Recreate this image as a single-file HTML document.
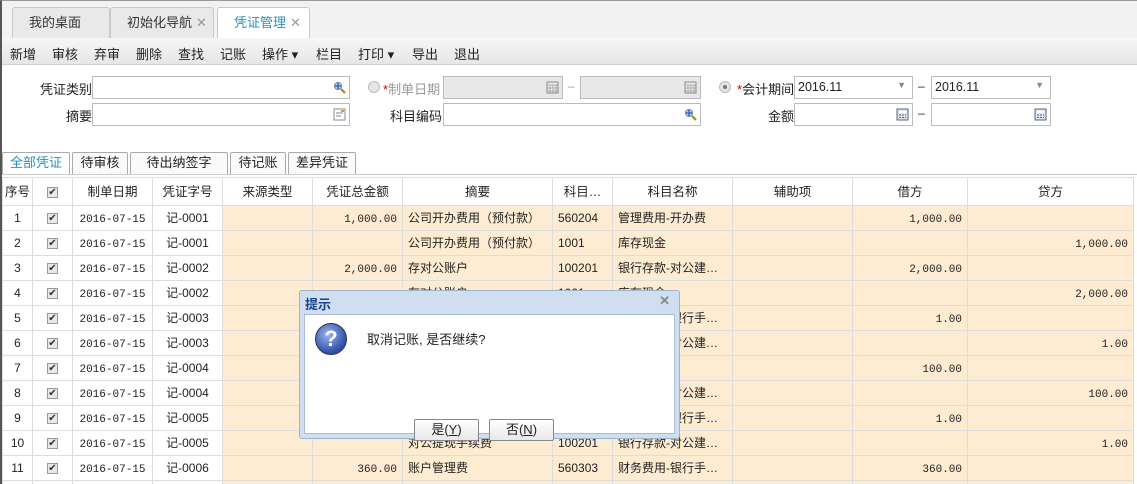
<!DOCTYPE html>
<html><head><meta charset="utf-8"><style>
*{box-sizing:border-box;margin:0;padding:0}
html,body{width:1137px;height:484px;overflow:hidden}
body{background:#fff;font-family:"Liberation Sans","Noto Sans CJK SC",sans-serif;font-size:12px;color:#222;position:relative}
.a{position:absolute}
.tabbar{left:0;top:0;width:1137px;height:38px;background:#f2f2f2;border-left:2px solid #555;border-top:1px solid #999}
.tab{position:absolute;top:6px;height:32px;border:1px solid #c8c8c8;border-bottom:none;background:#e9e9e9;border-radius:3px 3px 0 0;line-height:30px;font-size:13px;color:#333;padding-left:16px}
.tab .x{color:#999;font-size:13px;margin-left:4px}
.tab.on{background:#fff;color:#2a8fbd}
.tool{left:0;top:38px;width:1137px;height:27px;background:linear-gradient(#f6f6f6,#e6e6e6);border-left:2px solid #555;border-bottom:1px solid #d0d0d0}
.tool span{position:absolute;top:6px;font-size:13px;color:#222}
.lbl{position:absolute;font-size:13px;text-align:right;color:#222}
.inp{position:absolute;height:23px;border:1px solid #bbb;background:#fff}
.inp.g{background:#e8e8e8}
.ic{position:absolute;right:3px;top:4px;width:13px;height:13px}
.st{position:absolute;top:152px;height:22px;border:1px solid #aaa;border-bottom:none;border-radius:2px 2px 0 0;background:#fafafa;text-align:center;line-height:20px;font-size:13px}
table{position:absolute;left:2px;top:177px;border-collapse:collapse;table-layout:fixed}
td,th{border:1px solid #ddd;height:25px;line-height:23px;vertical-align:middle;font-weight:normal;font-size:12px;white-space:nowrap;overflow:hidden;padding:0 5px}
th{height:28px;line-height:26px;text-align:center;background:#fff;font-size:12.5px}
td.p{background:#fdebd2}
.n{font-family:"Liberation Mono",monospace;font-size:11px;text-align:right}
.n span{display:inline-block;line-height:11px;vertical-align:middle;position:relative;top:4px}
.c{text-align:center}
.cb{display:inline-block;vertical-align:middle;width:11px;height:11px;border:1px solid #999;background:#e8e8e8;font-size:10px;line-height:9px;text-align:center;color:#333}
.dlg{left:299px;top:290px;width:381px;height:149px;background:#cfdff0;border:1px solid #9db3cc;border-radius:3px}
.dlg .b{position:absolute;left:4px;top:23px;width:371px;height:120px;background:#fff;border:1px solid #a8bcd4}
.btn{position:absolute;top:104px;width:65px;height:22px;border:1px solid #888;border-radius:2px;background:linear-gradient(#fff,#e8e8e8);text-align:center;line-height:20px;font-size:13px}
</style></head><body>
<div class="a tabbar">
<div class="tab" style="left:10px;width:98px">我的桌面</div>
<div class="tab" style="left:108px;width:104px">初始化导航<span class="x">✕</span></div>
<div class="tab on" style="left:215px;width:93px;padding-left:16px">凭证管理<span class="x">✕</span></div>
</div>
<div class="a tool">
<span style="left:8px">新增</span><span style="left:50px">审核</span><span style="left:92px">弃审</span><span style="left:134px">删除</span><span style="left:176px">查找</span><span style="left:218px">记账</span><span style="left:260px">操作 ▾</span><span style="left:314px">栏目</span><span style="left:356px">打印 ▾</span><span style="left:410px">导出</span><span style="left:452px">退出</span>
</div>
<div class="lbl" style="left:20px;top:79px;width:72px">凭证类别</div>
<div class="inp" style="left:92px;top:76px;width:258px"><svg class="ic" viewBox="0 0 13 13"><circle cx="5" cy="5" r="3.5" fill="#cde" stroke="#68a"/><path d="M8 8l4 4" stroke="#a80" stroke-width="2"/><path d="M2 5h6M5 2v6" stroke="#36b" stroke-width="1.5"/></svg></div>
<div class="lbl" style="left:20px;top:106px;width:72px">摘要</div>
<div class="inp" style="left:92px;top:103px;width:258px"><svg class="ic" viewBox="0 0 13 13"><rect x="1" y="1" width="11" height="11" fill="#fff" stroke="#889"/><path d="M3 5h7M3 8h5" stroke="#789"/><rect x="8" y="2" width="3" height="2" fill="#e90"/></svg></div>
<div class="a" style="left:368px;top:81px;width:12px;height:12px;border-radius:50%;border:1px solid #bbb;background:#e4e4e4"></div>
<div class="lbl" style="left:383px;top:79px;color:#999"><span style="color:#c00">*</span>制单日期</div>
<div class="inp g" style="left:443px;top:76px;width:120px"><svg class="ic" viewBox="0 0 13 13"><rect x="1" y="1" width="11" height="11" fill="#eee" stroke="#888"/><path d="M1 4h11M4 4v8M7 4v8M10 4v8M1 7h11M1 10h11" stroke="#999" stroke-width=".7"/></svg></div>
<div class="a" style="left:568px;top:79px;color:#999">–</div>
<div class="inp g" style="left:580px;top:76px;width:121px"><svg class="ic" viewBox="0 0 13 13"><rect x="1" y="1" width="11" height="11" fill="#eee" stroke="#888"/><path d="M1 4h11M4 4v8M7 4v8M10 4v8M1 7h11M1 10h11" stroke="#999" stroke-width=".7"/></svg></div>
<div class="lbl" style="left:370px;top:106px;width:72px">科目编码</div>
<div class="inp" style="left:443px;top:103px;width:258px"><svg class="ic" viewBox="0 0 13 13"><circle cx="5" cy="5" r="3.5" fill="#cde" stroke="#68a"/><path d="M8 8l4 4" stroke="#a80" stroke-width="2"/><path d="M2 5h6M5 2v6" stroke="#36b" stroke-width="1.5"/></svg></div>
<div class="a" style="left:719px;top:81px;width:12px;height:12px;border-radius:50%;border:1px solid #bbb;background:#e4e4e4"><div style="margin:3px;width:4px;height:4px;border-radius:50%;background:#777"></div></div>
<div class="lbl" style="left:737px;top:79px"><span style="color:#c00">*</span>会计期间</div>
<div class="inp" style="left:794px;top:76px;width:119px;padding:3px 3px;font-size:12.5px">2016.11<span style="position:absolute;right:6px;top:3px;color:#888;font-size:9px">▼</span></div>
<div class="a" style="left:918px;top:79px">–</div>
<div class="inp" style="left:931px;top:76px;width:120px;padding:3px 3px;font-size:12.5px">2016.11<span style="position:absolute;right:6px;top:3px;color:#888;font-size:9px">▼</span></div>
<div class="lbl" style="left:740px;top:106px;width:54px">金额</div>
<div class="inp" style="left:794px;top:103px;width:119px"><svg class="ic" viewBox="0 0 13 13"><rect x="1" y="1" width="11" height="11" fill="#dde6f2" stroke="#567"/><rect x="3" y="3" width="7" height="2" fill="#fff"/><path d="M3 7h2M6 7h2M9 7h1M3 9.5h2M6 9.5h2M9 9.5h1" stroke="#567"/></svg></div>
<div class="a" style="left:918px;top:106px">–</div>
<div class="inp" style="left:931px;top:103px;width:120px"><svg class="ic" viewBox="0 0 13 13"><rect x="1" y="1" width="11" height="11" fill="#dde6f2" stroke="#567"/><rect x="3" y="3" width="7" height="2" fill="#fff"/><path d="M3 7h2M6 7h2M9 7h1M3 9.5h2M6 9.5h2M9 9.5h1" stroke="#567"/></svg></div>
<div class="a" style="left:0;top:38px;width:2px;height:446px;background:#555;z-index:2"></div>
<div class="st" style="left:2px;width:68px;color:#2a8fbd;background:#fff">全部凭证</div>
<div class="st" style="left:72px;width:56px">待审核</div>
<div class="st" style="left:130px;width:98px">待出纳签字</div>
<div class="st" style="left:230px;width:56px">待记账</div>
<div class="st" style="left:288px;width:68px">差异凭证</div>
<div class="a" style="left:2px;top:174px;width:1135px;height:1px;background:#ccc"></div>
<table>
<colgroup><col style="width:30px"><col style="width:40px"><col style="width:80px"><col style="width:70px"><col style="width:90px"><col style="width:90px"><col style="width:150px"><col style="width:60px"><col style="width:120px"><col style="width:120px"><col style="width:115px"><col style="width:166px"></colgroup>
<tr><th style="padding:0">序号</th><th><span class="cb">✔</span></th><th>制单日期</th><th>凭证字号</th><th>来源类型</th><th>凭证总金额</th><th>摘要</th><th style="padding:0">科目…</th><th>科目名称</th><th>辅助项</th><th>借方</th><th>贷方</th></tr>
<tr><td class="c">1</td><td class="c"><span class="cb">✔</span></td><td class="c n" style="text-align:center"><span>2016-07-15</span></td><td class="c">记-0001</td><td class="p"></td><td class="p n"><span>1,000.00</span></td><td class="p">公司开办费用（预付款）</td><td class="p">560204</td><td class="p">管理费用-开办费</td><td class="p"></td><td class="p n"><span>1,000.00</span></td><td class="p n"></td></tr>
<tr><td class="c">2</td><td class="c"><span class="cb">✔</span></td><td class="c n" style="text-align:center"><span>2016-07-15</span></td><td class="c">记-0001</td><td class="p"></td><td class="p n"></td><td class="p">公司开办费用（预付款）</td><td class="p">1001</td><td class="p">库存现金</td><td class="p"></td><td class="p n"></td><td class="p n"><span>1,000.00</span></td></tr>
<tr><td class="c">3</td><td class="c"><span class="cb">✔</span></td><td class="c n" style="text-align:center"><span>2016-07-15</span></td><td class="c">记-0002</td><td class="p"></td><td class="p n"><span>2,000.00</span></td><td class="p">存对公账户</td><td class="p">100201</td><td class="p">银行存款-对公建…</td><td class="p"></td><td class="p n"><span>2,000.00</span></td><td class="p n"></td></tr>
<tr><td class="c">4</td><td class="c"><span class="cb">✔</span></td><td class="c n" style="text-align:center"><span>2016-07-15</span></td><td class="c">记-0002</td><td class="p"></td><td class="p n"></td><td class="p">存对公账户</td><td class="p">1001</td><td class="p">库存现金</td><td class="p"></td><td class="p n"></td><td class="p n"><span>2,000.00</span></td></tr>
<tr><td class="c">5</td><td class="c"><span class="cb">✔</span></td><td class="c n" style="text-align:center"><span>2016-07-15</span></td><td class="c">记-0003</td><td class="p"></td><td class="p n"><span>1.00</span></td><td class="p">对公提现手续费</td><td class="p">560303</td><td class="p">财务费用-银行手…</td><td class="p"></td><td class="p n"><span>1.00</span></td><td class="p n"></td></tr>
<tr><td class="c">6</td><td class="c"><span class="cb">✔</span></td><td class="c n" style="text-align:center"><span>2016-07-15</span></td><td class="c">记-0003</td><td class="p"></td><td class="p n"></td><td class="p">对公提现手续费</td><td class="p">100201</td><td class="p">银行存款-对公建…</td><td class="p"></td><td class="p n"></td><td class="p n"><span>1.00</span></td></tr>
<tr><td class="c">7</td><td class="c"><span class="cb">✔</span></td><td class="c n" style="text-align:center"><span>2016-07-15</span></td><td class="c">记-0004</td><td class="p"></td><td class="p n"><span>100.00</span></td><td class="p">转账</td><td class="p">1001</td><td class="p">库存现金</td><td class="p"></td><td class="p n"><span>100.00</span></td><td class="p n"></td></tr>
<tr><td class="c">8</td><td class="c"><span class="cb">✔</span></td><td class="c n" style="text-align:center"><span>2016-07-15</span></td><td class="c">记-0004</td><td class="p"></td><td class="p n"></td><td class="p">转账</td><td class="p">100201</td><td class="p">银行存款-对公建…</td><td class="p"></td><td class="p n"></td><td class="p n"><span>100.00</span></td></tr>
<tr><td class="c">9</td><td class="c"><span class="cb">✔</span></td><td class="c n" style="text-align:center"><span>2016-07-15</span></td><td class="c">记-0005</td><td class="p"></td><td class="p n"><span>1.00</span></td><td class="p">对公提现手续费</td><td class="p">560303</td><td class="p">财务费用-银行手…</td><td class="p"></td><td class="p n"><span>1.00</span></td><td class="p n"></td></tr>
<tr><td class="c">10</td><td class="c"><span class="cb">✔</span></td><td class="c n" style="text-align:center"><span>2016-07-15</span></td><td class="c">记-0005</td><td class="p"></td><td class="p n"></td><td class="p">对公提现手续费</td><td class="p">100201</td><td class="p">银行存款-对公建…</td><td class="p"></td><td class="p n"></td><td class="p n"><span>1.00</span></td></tr>
<tr><td class="c">11</td><td class="c"><span class="cb">✔</span></td><td class="c n" style="text-align:center"><span>2016-07-15</span></td><td class="c">记-0006</td><td class="p"></td><td class="p n"><span>360.00</span></td><td class="p">账户管理费</td><td class="p">560303</td><td class="p">财务费用-银行手…</td><td class="p"></td><td class="p n"><span>360.00</span></td><td class="p n"></td></tr>
<tr><td></td><td></td><td></td><td></td><td class="p"></td><td class="p"></td><td class="p"></td><td class="p"></td><td class="p"></td><td class="p"></td><td class="p"></td><td class="p"></td></tr>
</table>
<div class="a dlg">
<div class="a" style="left:5px;top:3px;font-size:13px;font-weight:bold;color:#15428b">提示</div>
<div class="a" style="right:9px;top:2px;color:#888;font-size:13px;font-weight:bold">✕</div>
<div class="b">
<div class="a" style="left:10px;top:8px;width:32px;height:32px;border-radius:50%;background:radial-gradient(circle at 40% 35%,#9ab4f0,#2d4fa8 70%);border:1px solid #334;color:#fff;font-weight:bold;font-size:22px;text-align:center;line-height:30px">?</div>
<div class="a" style="left:62px;top:14px;font-size:13px">取消记账, 是否继续?</div>
<div class="btn" style="left:109px">是(<u>Y</u>)</div>
<div class="btn" style="left:184px">否(<u>N</u>)</div>
</div>
</div>
</body></html>
